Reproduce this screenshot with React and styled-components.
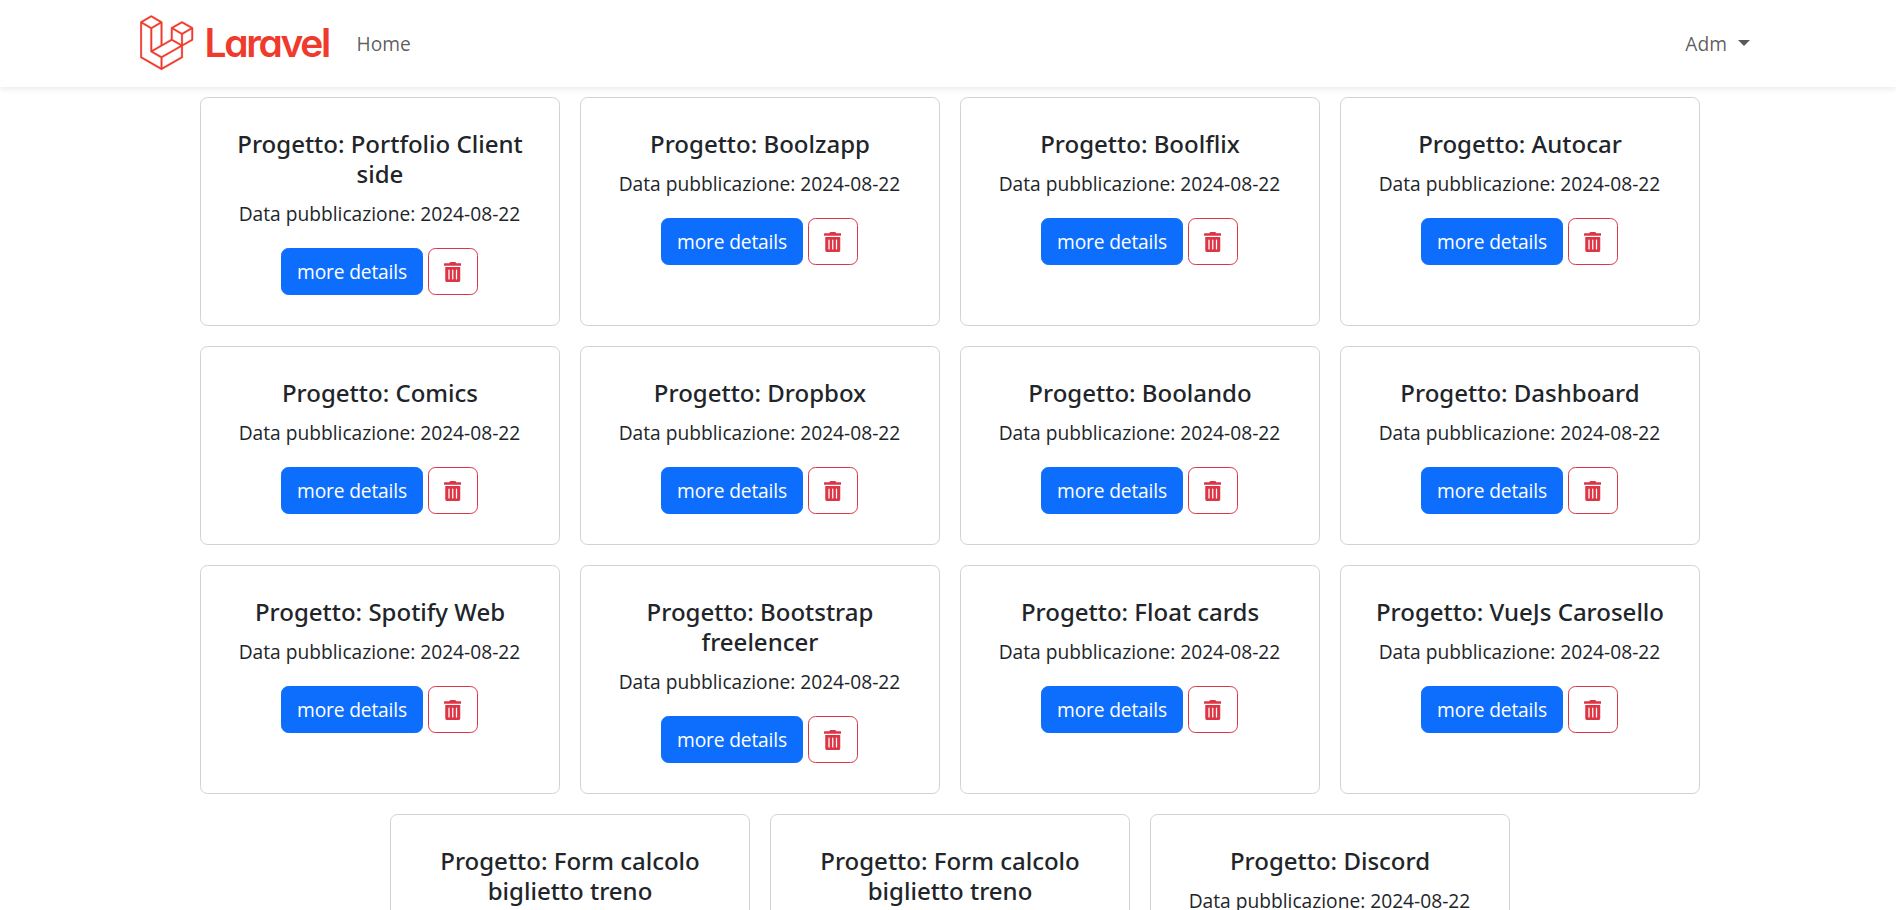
import React from "react";
import styled, { createGlobalStyle } from "styled-components";
import { FaTrashAlt } from "react-icons/fa";

const GlobalStyle = createGlobalStyle`
  *, *::before, *::after { box-sizing: border-box; }
  html { overflow: hidden; }
  body {
    margin: 0;
    height: 910px;
    overflow: hidden;
    background: #fff;
    color: #212529;
    font-family: "Open Sans", "Noto Sans", sans-serif;
    font-size: 19.2px;
    line-height: 30px;
  }
`;

const Navbar = styled.nav`
  position: relative;
  height: 87px;
  background: #fff;
  box-shadow: 0 2.5px 5px rgba(0, 0, 0, 0.075);
`;

const NavInner = styled.div`
  display: flex;
  align-items: center;
  height: 100%;
  padding: 0 146px 0 139.5px;
`;

const Brand = styled.a`
  display: flex;
  margin-right: 17px;
`;

const BrandLogo = styled.svg`
  display: block;
  width: 200px;
  height: 60px;
  fill: #ef3b2d;
`;

const Wordmark = styled.text`
  font-family: Inter, sans-serif;
  font-size: 39px;
  font-weight: 600;
  letter-spacing: -2.35px;
  font-feature-settings: "cv11";
`;

const NavLink = styled.a`
  padding-top: 1px;
  color: rgba(0, 0, 0, 0.65);
  text-decoration: none;
`;

const UserMenu = styled(NavLink)`
  display: flex;
  align-items: center;
  gap: 11px;
  margin-left: auto;
`;

const Caret = styled.span`
  border: 6px solid transparent;
  border-top-color: currentColor;
  border-bottom: 0;
  margin-top: -3px;
`;

const Grid = styled.main`
  display: flex;
  flex-wrap: wrap;
  justify-content: center;
  gap: 20px;
  width: 1500px;
  margin: 10px 196px 0 200px;
`;

const Card = styled.article`
  width: 360px;
  padding: 31px 30px 30px;
  border: 1px solid #d2d2d2;
  border-radius: 7.5px;
  text-align: center;
`;

const Title = styled.h5`
  margin: 0 0 10px;
  font-family: "Noto Sans", sans-serif;
  font-size: 24px;
  font-weight: 500;
  line-height: 30px;
`;

const PublishedOn = styled.p`
  margin: 0 1px 19px 0;
`;

const Actions = styled.div`
  display: flex;
  justify-content: center;
  gap: 5px;
  margin-right: 2px;
`;

const Button = styled.button`
  display: flex;
  align-items: center;
  justify-content: center;
  width: ${(p) => (p.$danger ? 50 : 142)}px;
  height: 47px;
  padding: ${(p) => (p.$danger ? "0" : "1px 0 0 1px")};
  border: 1px solid ${(p) => (p.$danger ? "#dc3545" : "#0d6efd")};
  border-radius: 7.5px;
  background: ${(p) => (p.$danger ? "transparent" : "#0d6efd")};
  color: ${(p) => (p.$danger ? "#dc3545" : "#fff")};
  font: inherit;
  letter-spacing: -0.15px;
`;

const TrashIcon = styled(FaTrashAlt)`
  width: 17.5px;
  height: 20px;
`;

const projects = [
  "Portfolio Client side",
  "Boolzapp",
  "Boolflix",
  "Autocar",
  "Comics",
  "Dropbox",
  "Boolando",
  "Dashboard",
  "Spotify Web",
  "Bootstrap freelencer",
  "Float cards",
  "VueJs Carosello",
  "Form calcolo biglietto treno",
  "Form calcolo biglietto treno",
  "Discord",
];

const MARK =
  "M49.626 11.564a.809.809 0 0 1 .028.209v10.972a.8.8 0 0 1-.402.694l-9.209 5.302V39.25c0 .286-.152.55-.4.694L20.42 51.01c-.044.025-.092.041-.14.058-.018.006-.035.017-.054.022a.805.805 0 0 1-.41 0c-.022-.006-.042-.018-.063-.026-.044-.016-.09-.03-.132-.054L.402 39.944A.801.801 0 0 1 0 39.25V6.334c0-.072.01-.142.028-.21.006-.023.02-.044.028-.067.015-.042.029-.085.051-.124.015-.026.037-.047.055-.071.023-.032.044-.065.071-.093.023-.023.053-.04.079-.06.029-.024.055-.05.088-.069h.001l9.61-5.533a.802.802 0 0 1 .8 0l9.61 5.533h.002c.032.02.059.045.088.068.026.02.055.038.078.06.028.029.048.062.072.094.017.024.04.045.054.071.023.04.036.082.052.124.008.023.022.044.028.068a.809.809 0 0 1 .028.209v20.559l8.008-4.611v-10.51c0-.07.01-.141.028-.208.007-.024.02-.045.028-.068.016-.042.03-.085.052-.124.015-.026.037-.047.054-.071.024-.032.044-.065.072-.093.023-.023.052-.04.078-.06.03-.024.056-.05.088-.069h.001l9.611-5.533a.801.801 0 0 1 .8 0l9.61 5.533c.034.02.06.045.09.068.025.02.054.038.077.06.028.029.048.062.072.094.018.024.04.045.054.071.023.039.036.082.052.124.009.023.022.044.028.068zm-1.574 10.718v-9.124l-3.363 1.936-4.646 2.675v9.124l8.01-4.611zm-9.61 16.505v-9.13l-4.57 2.61-13.05 7.448v9.216l17.62-10.144zM1.602 7.719v31.068L19.22 48.93v-9.214l-9.204-5.209-.003-.002-.004-.002c-.031-.018-.057-.044-.086-.066-.025-.02-.054-.036-.076-.058l-.002-.003c-.026-.025-.044-.056-.066-.084-.02-.027-.044-.05-.06-.078l-.001-.003c-.018-.03-.029-.066-.042-.1-.013-.03-.03-.058-.038-.09v-.001c-.01-.038-.012-.078-.016-.117-.004-.03-.012-.06-.012-.09v-.002-21.481L4.965 9.654 1.602 7.72zm8.81-5.994L2.405 6.334l8.005 4.609 8.006-4.61-8.006-4.608zm4.164 28.764l4.645-2.674V7.719l-3.363 1.936-4.646 2.675v20.096l3.364-1.937zM39.243 7.164l-8.006 4.609 8.006 4.609 8.005-4.61-8.005-4.608zm-.801 10.605l-4.646-2.675-3.363-1.936v9.124l4.645 2.674 3.364 1.937v-9.124zM20.02 38.33l11.743-6.704 5.87-3.35-8-4.606-9.211 5.303-8.395 4.833 7.993 4.524z";

function Logo() {
  return (
    <BrandLogo viewBox="0 0 200 60">
      <path d={MARK} stroke="#ef3b2d" strokeWidth="0.25" transform="translate(0.2 1.5) scale(1.065)" />
      <Wordmark x="64.5" y="43.3">
        Laravel
      </Wordmark>
    </BrandLogo>
  );
}

function ProjectCard({ name }) {
  return (
    <Card>
      <Title>Progetto: {name}</Title>
      <PublishedOn>Data pubblicazione: 2024-08-22</PublishedOn>
      <Actions>
        <Button>more details</Button>
        <Button $danger aria-label="delete">
          <TrashIcon />
        </Button>
      </Actions>
    </Card>
  );
}

export default function App() {
  return (
    <>
      <GlobalStyle />
      <Navbar>
        <NavInner>
          <Brand>
            <Logo />
          </Brand>
          <NavLink>Home</NavLink>
          <UserMenu>
            Adm
            <Caret />
          </UserMenu>
        </NavInner>
      </Navbar>
      <Grid>
        {projects.map((name, i) => (
          <ProjectCard key={i} name={name} />
        ))}
      </Grid>
    </>
  );
}
